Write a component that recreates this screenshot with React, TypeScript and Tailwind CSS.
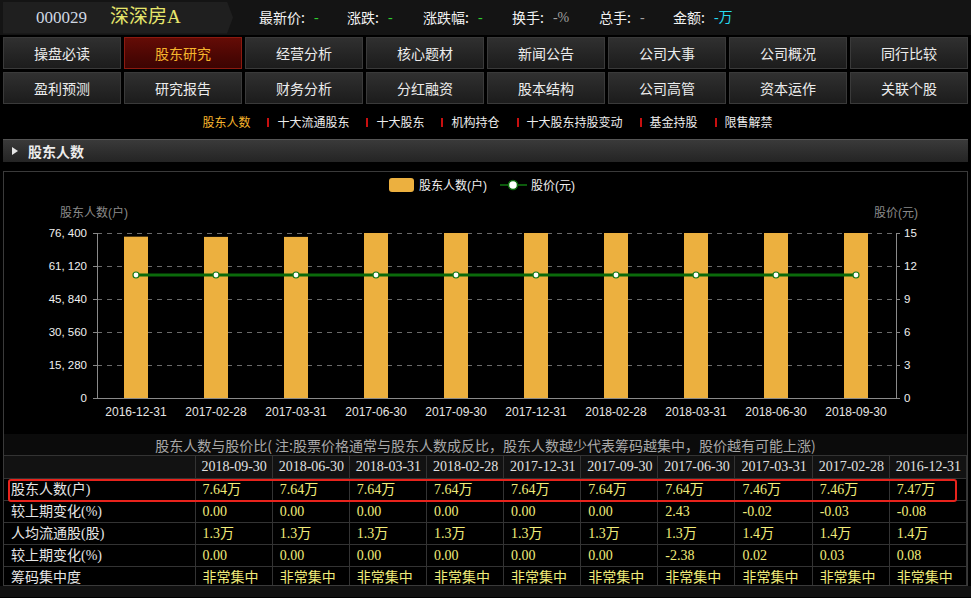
import React from 'react';

const SERIF = { fontFamily: '"Liberation Serif", "Noto Sans CJK SC", serif' };

const NAV = [
  ['操盘必读', '股东研究', '经营分析', '核心题材', '新闻公告', '公司大事', '公司概况', '同行比较'],
  ['盈利预测', '研究报告', '财务分析', '分红融资', '股本结构', '公司高管', '资本运作', '关联个股'],
];

const SUBTABS = ['股东人数', '十大流通股东', '十大股东', '机构持仓', '十大股东持股变动', '基金持股', '限售解禁'];

const CHART = [
  { date: '2016-12-31', holders: 74700 },
  { date: '2017-02-28', holders: 74600 },
  { date: '2017-03-31', holders: 74600 },
  { date: '2017-06-30', holders: 76400 },
  { date: '2017-09-30', holders: 76400 },
  { date: '2017-12-31', holders: 76400 },
  { date: '2018-02-28', holders: 76400 },
  { date: '2018-03-31', holders: 76400 },
  { date: '2018-06-30', holders: 76400 },
  { date: '2018-09-30', holders: 76400 },
];

const DATES = ['2018-09-30', '2018-06-30', '2018-03-31', '2018-02-28', '2017-12-31', '2017-09-30', '2017-06-30', '2017-03-31', '2017-02-28', '2016-12-31'];

const ROWS: [string, string[]][] = [
  ['股东人数(户)', ['7.64万', '7.64万', '7.64万', '7.64万', '7.64万', '7.64万', '7.64万', '7.46万', '7.46万', '7.47万']],
  ['较上期变化(%)', ['0.00', '0.00', '0.00', '0.00', '0.00', '0.00', '2.43', '-0.02', '-0.03', '-0.08']],
  ['人均流通股(股)', ['1.3万', '1.3万', '1.3万', '1.3万', '1.3万', '1.3万', '1.3万', '1.4万', '1.4万', '1.4万']],
  ['较上期变化(%)', ['0.00', '0.00', '0.00', '0.00', '0.00', '0.00', '-2.38', '0.02', '0.03', '0.08']],
  ['筹码集中度', Array(10).fill('非常集中')],
];

export default function App() {
  return (
    <div
      className="relative h-[598px] w-[971px] overflow-hidden bg-black text-[#e6e6e6]"
      style={{ fontFamily: '"Noto Sans CJK SC", "Liberation Sans", sans-serif' }}
    >
      <TopBar />

      {/* Nav buttons */}
      <div className="mt-[2px] grid grid-cols-8 gap-[3px] px-[3px]">
        {NAV.flat().map((n, i) => {
          const active = i === 1;
          return (
            <div
              key={n}
              className={
                active
                  ? 'flex h-[32px] items-center justify-center border border-[#8c1a10] bg-gradient-to-b from-[#640c06] to-[#3c0402] text-[14px] text-[#f7b52c]'
                  : 'flex h-[32px] items-center justify-center border border-[#3a3a3a] bg-gradient-to-b from-[#303030] to-[#1c1c1c] text-[14px] text-[#ececec]'
              }
            >
              {n}
            </div>
          );
        })}
      </div>

      {/* Sub tabs */}
      <div className="flex h-[35px] items-center justify-center pl-[4px] text-[12px]">
        {SUBTABS.map((t, i) => (
          <React.Fragment key={t}>
            {i > 0 && <span className="ml-[17px] mr-[8px] mt-[2px] h-[9px] w-[2px] bg-[#c81010]" />}
            <span className={i === 0 ? 'text-[#f7b52c]' : 'text-[#ececec]'}>{t}</span>
          </React.Fragment>
        ))}
      </div>

      {/* Section header */}
      <div className="mx-[3px] flex h-[23px] items-center border-t border-[#555] bg-gradient-to-b from-[#3a3a3a] to-[#242424]">
        <svg width="8" height="10" className="ml-[8px]" viewBox="0 0 8 10">
          <path d="M1 1 L7 5 L1 9 Z" fill="#e6e6e6" />
        </svg>
        <span className="ml-[9px] text-[14px] font-bold text-[#ececec]">股东人数</span>
      </div>

      {/* Chart + table */}
      <div className="mx-[3px] mt-[9px] h-[415px] overflow-hidden border border-[#3a3a3a]">
        <Chart />
        <div className="flex h-[22px] items-center justify-center border-b border-[#333] bg-[#0b0b0b] pt-[2px] text-[14px] text-[#a8a8a8]">
          股东人数与股价比( 注:股票价格通常与股东人数成反比，股东人数越少代表筹码越集中，股价越有可能上涨)
        </div>
        <table className="w-full table-fixed border-collapse text-[14px]" style={SERIF}>
          <colgroup>
            <col className="w-[191px]" />
          </colgroup>
          <thead>
            <tr className="h-[22px] bg-[#121212]">
              <th className="border-r border-b border-[#333]" />
              {DATES.map((d) => (
                <th key={d} className="border-r border-b border-[#333] pl-[6px] text-left font-normal text-[#e0e0e0]">
                  {d}
                </th>
              ))}
            </tr>
          </thead>
          <tbody>
            {ROWS.map(([label, vals], ri) => (
              <tr key={ri} className="h-[22px]">
                <td className="border-r border-b border-[#333] pl-[7px] text-[#e6e6e6]">{label}</td>
                {vals.map((v, i) => (
                  <td key={i} className="border-r border-b border-[#333] pl-[7px] text-[#f1ec7a]">
                    {v}
                  </td>
                ))}
              </tr>
            ))}
          </tbody>
        </table>
      </div>
      <div className="h-[11px] bg-[#111]" />

      {/* highlight box over first row */}
      <div className="pointer-events-none absolute left-[8px] top-[479px] h-[23px] w-[949px] rounded-[3px] border-2 border-[#e8231c]" />
    </div>
  );
}

function TopBar() {
  const items = [
    { label: '最新价', value: '-', color: 'text-[#2fd02f]', w: 'w-[88px]' },
    { label: '涨跌', value: '-', color: 'text-[#2fd02f]', w: 'w-[76px]' },
    { label: '涨跌幅', value: '-', color: 'text-[#2fd02f]', w: 'w-[89px]' },
    { label: '换手', value: '-%', color: 'text-[#a0a0a0]', w: 'w-[87px]' },
    { label: '总手', value: '-', color: 'text-[#a0a0a0]', w: 'w-[74px]' },
    { label: '金额', value: '-万', color: 'text-[#27d9f0]', w: 'w-[90px]' },
  ];
  return (
    <div className="flex h-[35px] items-center bg-[#141414]">
      <div className="ml-[3px] flex h-[32px] w-[230px] items-center bg-[#1f1f1f] [clip-path:polygon(0_0,calc(100%-6px)_0,100%_50%,calc(100%-6px)_100%,0_100%)]">
        <span className="ml-[33px] text-[17px] text-[#cfd8e2]" style={SERIF}>000029</span>
        <span className="ml-[23px] text-[19px] text-[#e6e66c]" style={SERIF}>深深房A</span>
      </div>
      <div className="ml-[26px] flex text-[14px]">
        {items.map((it) => (
          <div key={it.label} className={`${it.w} flex whitespace-nowrap`}>
            <span className="text-[#f2f2f2]">{it.label}:</span>
            <span className={`ml-[9px] ${it.color}`} style={SERIF}>{it.value}</span>
          </div>
        ))}
      </div>
    </div>
  );
}

function Chart() {
  const x0 = 97;
  const x1 = 896;
  const yTop = 234;
  const yBot = 399;
  const h = yBot - yTop;
  const leftTicks = ['76, 400', '61, 120', '45, 840', '30, 560', '15, 280', '0'];
  const rightTicks = ['15', '12', '9', '6', '3', '0'];
  const priceY = 276;
  const font = '"Liberation Sans", "Noto Sans CJK SC", sans-serif';
  return (
    <svg width="963" height="262" viewBox="4 173 963 262" className="block">
      {/* legend */}
      <rect x="389" y="179" width="25" height="14" rx="3" fill="#ecb03f" />
      <text x="419" y="191" fontSize="12" fill="#f0f0f0" fontFamily={font}>股东人数(户)</text>
      <line x1="500" y1="186" x2="527" y2="186" stroke="#0c5a0c" strokeWidth="2" />
      <circle cx="513" cy="186" r="4.5" fill="#fff" stroke="#0c6a0c" strokeWidth="1.5" />
      <text x="531" y="191" fontSize="12" fill="#f0f0f0" fontFamily={font}>股价(元)</text>

      <text x="60" y="218" fontSize="12" fill="#8a8a8a" fontFamily={font}>股东人数(户)</text>
      <text x="918" y="218" fontSize="12" fill="#8a8a8a" fontFamily={font} textAnchor="end">股价(元)</text>

      {leftTicks.map((t, i) => {
        const y = yTop + (h * i) / 5;
        return (
          <g key={i}>
            {i < 5 && (
              <line x1={x0} y1={y + 0.5} x2={x1} y2={y + 0.5} stroke="#6a6a6a" strokeDasharray="5 5" />
            )}
            <line x1={x0 - 4} y1={y + 0.5} x2={x0} y2={y + 0.5} stroke="#888" />
            <line x1={x1} y1={y + 0.5} x2={x1 + 4} y2={y + 0.5} stroke="#888" />
            <text x={x0 - 10} y={y + 4} fontSize="11.5" fill="#f0f0f0" textAnchor="end" fontFamily={font}>
              {t}
            </text>
            <text x={x1 + 8} y={y + 4} fontSize="11.5" fill="#f0f0f0" fontFamily={font}>
              {rightTicks[i]}
            </text>
          </g>
        );
      })}

      {CHART.map((d, i) => {
        const cx = 136 + i * 80;
        const top = yBot - (h * d.holders) / 76400;
        return (
          <g key={d.date}>
            <rect x={cx - 12} y={top} width="24" height={yBot - top} fill="#ecb03f" />
            <text x={cx} y="417" fontSize="12" fill="#e6e6e6" textAnchor="middle" fontFamily={font}>
              {d.date}
            </text>
          </g>
        );
      })}

      <line x1={x0 + 0.5} y1={yTop} x2={x0 + 0.5} y2={yBot} stroke="#8a8a8a" />
      <line x1={x1 + 0.5} y1={yTop} x2={x1 + 0.5} y2={yBot} stroke="#8a8a8a" />
      <line x1={x0} y1={yBot + 0.5} x2={x1 + 1} y2={yBot + 0.5} stroke="#8a8a8a" />

      <line x1="136" y1={priceY} x2="856" y2={priceY} stroke="#0b6a0b" strokeWidth="3" />
      {CHART.map((d, i) => (
        <circle key={d.date} cx={136 + i * 80} cy={priceY} r="3" fill="#fff" stroke="#1a7a1a" strokeWidth="1.2" />
      ))}
    </svg>
  );
}
